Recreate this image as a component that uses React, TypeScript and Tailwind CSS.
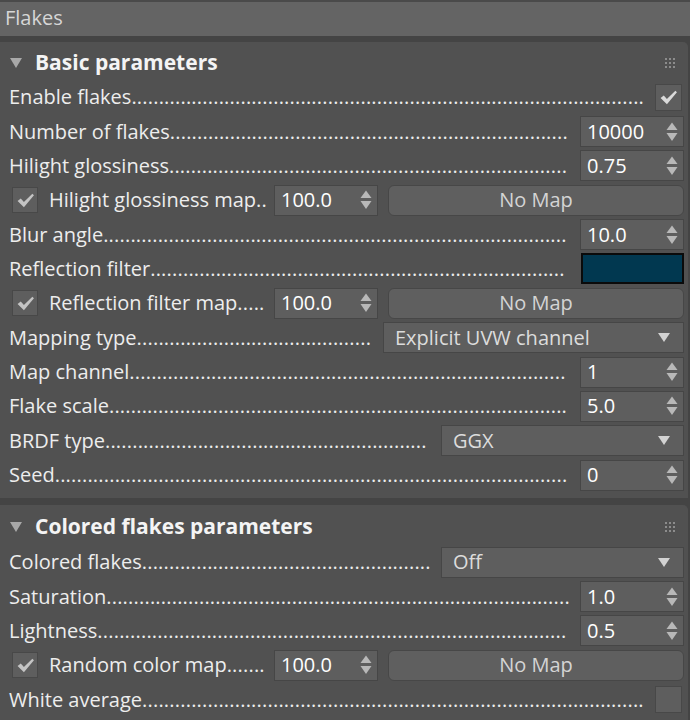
import React, { useLayoutEffect, useRef, useState } from "react";

const FONT = "font-['Segoe_UI','Open_Sans','Noto_Sans',sans-serif]";

function Leader({ label }: { label: string }) {
  const boxRef = useRef<HTMLSpanElement>(null);
  const probeRef = useRef<HTMLSpanElement>(null);
  const [n, setN] = useState(0);
  useLayoutEffect(() => {
    const box = boxRef.current;
    const probe = probeRef.current;
    if (!box || !probe) return;
    const dot = probe.getBoundingClientRect().width / 10;
    const avail = box.getBoundingClientRect().width;
    if (dot > 0) setN(Math.max(0, Math.floor(avail / dot)));
  }, [label]);
  return (
    <div className="flex flex-1 min-w-0 whitespace-nowrap relative">
      <span className="shrink-0">{label}</span>
      <span ref={boxRef} className="flex-1 min-w-0 tracking-[0.2px]">
        {".".repeat(n)}
      </span>
      <span
        ref={probeRef}
        aria-hidden
        className="absolute left-0 top-0 invisible tracking-[0.2px]"
      >
        {".........."}
      </span>
    </div>
  );
}

function Check({ checked, size = 27, dim = false }: { checked: boolean; size?: number; dim?: boolean }) {
  return (
    <div
      className={`shrink-0 flex items-center justify-center bg-[#5e5e5e] border border-[#484848] ${
        size === 27 ? "w-[27px] h-[27px]" : "w-[26px] h-[26px]"
      }`}
    >
      {checked && (
        <svg width="19" height="17" viewBox="0 0 18 16">
          <path
            d="M1.5 8.5 L4.5 6 L7.5 9.5 L15.5 1.5 L17 3 L7.5 14.5 Z"
            fill={dim ? "#c4c4c4" : "#dadada"}
          />
        </svg>
      )}
    </div>
  );
}

function Spinner({ value }: { value: string }) {
  return (
    <div className="w-[104px] shrink-0 h-[31px] bg-[#5e5e5e] border border-[#464646] flex items-center pl-[6px] pr-[5px] text-white">
      <span className="flex-1 leading-none">{value}</span>
      <svg width="12" height="20" viewBox="0 0 12 20">
        <path d="M0.5 8 L6 0.5 L11.5 8 Z" fill="#b8b8b8" />
        <path d="M0.5 11 L11.5 11 L6 19 Z" fill="#b8b8b8" />
      </svg>
    </div>
  );
}

function Dropdown({ value, w }: { value: string; w: string }) {
  return (
    <div className={`${w} shrink-0 h-[31px] bg-[#5e5e5e] border border-[#464646] flex items-center pl-[11px] pr-[13px] text-[#dcdcdc]`}>
      <span className="flex-1 leading-none">{value}</span>
      <svg width="12" height="9" viewBox="0 0 12 9">
        <path d="M0 0 L12 0 L6 9 Z" fill="#d2d2d2" />
      </svg>
    </div>
  );
}

function NoMap() {
  return (
    <div className="flex-1 h-[31px] bg-[#5f5f5f] border border-[#474747] rounded-[6px] flex items-center justify-center text-[#d4d4d4]">
      No Map
    </div>
  );
}

function Row({ children }: { children: React.ReactNode }) {
  return <div className="h-[34.36px] flex items-center pl-[9px] pr-[4px]">{children}</div>;
}

function MapRow({ label, value }: { label: string; value: string }) {
  return (
    <div className="h-[34.36px] flex items-center pl-[12px] pr-[4px]">
      <Check checked size={26} dim />
      <div className="w-[219px] ml-[11px] mr-[6px] flex">
        <Leader label={label} />
      </div>
      <Spinner value={value} />
      <div className="w-[10px] shrink-0" />
      <NoMap />
    </div>
  );
}

function Grip() {
  return (
    <div className="grid grid-cols-3 gap-[2px]">
      {Array.from({ length: 9 }).map((_, i) => (
        <div key={i} className="w-[2px] h-[2px] bg-[#8c8c8c]" />
      ))}
    </div>
  );
}

function Header({ title, h }: { title: string; h: string }) {
  return (
    <div className={`${h} flex items-center pl-[10px] pr-[13px] pt-[3px]`}>
      <svg width="12" height="10" viewBox="0 0 12 10" className="shrink-0">
        <path d="M0 0 L12 0 L6 10 Z" fill="#a8a8a8" />
      </svg>
      <span className="ml-[13px] flex-1 font-bold text-[#f4f4f4] text-[21px]">{title}</span>
      <Grip />
    </div>
  );
}

export default function App() {
  return (
    <div className={`w-[690px] h-[720px] overflow-hidden bg-[#444444] ${FONT} text-[20px] text-[#ededed]`}>
      <div className="h-[36px] bg-[#646464] border-t-2 border-[#4a4a4a] flex items-center pl-[5px] pb-[3px] text-[#d6d6d6]">
        Flakes
      </div>
      <div className="h-[6px]" />
      <div className="mr-[2px] bg-[#515151] rounded-tr-[5px] h-[456px]">
        <Header title="Basic parameters" h="h-[38px]" />
        <Row>
          <Leader label="Enable flakes" />
          <div className="w-[10px] shrink-0" />
          <Check checked />
          <div className="w-[2px] shrink-0" />
        </Row>
        <Row>
          <Leader label="Number of flakes" />
          <div className="w-[10px] shrink-0" />
          <Spinner value="10000" />
        </Row>
        <Row>
          <Leader label="Hilight glossiness" />
          <div className="w-[10px] shrink-0" />
          <Spinner value="0.75" />
        </Row>
        <MapRow label="Hilight glossiness map" value="100.0" />
        <Row>
          <Leader label="Blur angle" />
          <div className="w-[10px] shrink-0" />
          <Spinner value="10.0" />
        </Row>
        <Row>
          <Leader label="Reflection filter" />
          <div className="w-[11px] shrink-0" />
          <div className="w-[103px] h-[31px] shrink-0 bg-[#013850] border-2 border-[#0a0a0a]" />
        </Row>
        <MapRow label="Reflection filter map" value="100.0" />
        <Row>
          <Leader label="Mapping type" />
          <div className="w-[8px] shrink-0" />
          <Dropdown value="Explicit UVW channel" w="w-[301px]" />
        </Row>
        <Row>
          <Leader label="Map channel" />
          <div className="w-[10px] shrink-0" />
          <Spinner value="1" />
        </Row>
        <Row>
          <Leader label="Flake scale" />
          <div className="w-[10px] shrink-0" />
          <Spinner value="5.0" />
        </Row>
        <Row>
          <Leader label="BRDF type" />
          <div className="w-[9px] shrink-0" />
          <Dropdown value="GGX" w="w-[243px]" />
        </Row>
        <Row>
          <Leader label="Seed" />
          <div className="w-[10px] shrink-0" />
          <Spinner value="0" />
        </Row>
      </div>
      <div className="h-[7px]" />
      <div className="mr-[2px] bg-[#515151] rounded-tr-[5px] h-[220px]">
        <Header title="Colored flakes parameters" h="h-[40px]" />
        <Row>
          <Leader label="Colored flakes" />
          <div className="w-[9px] shrink-0" />
          <Dropdown value="Off" w="w-[243px]" />
        </Row>
        <Row>
          <Leader label="Saturation" />
          <div className="w-[10px] shrink-0" />
          <Spinner value="1.0" />
        </Row>
        <Row>
          <Leader label="Lightness" />
          <div className="w-[10px] shrink-0" />
          <Spinner value="0.5" />
        </Row>
        <MapRow label="Random color map" value="100.0" />
        <Row>
          <Leader label="White average" />
          <div className="w-[10px] shrink-0" />
          <Check checked={false} />
          <div className="w-[2px] shrink-0" />
        </Row>
      </div>
    </div>
  );
}
